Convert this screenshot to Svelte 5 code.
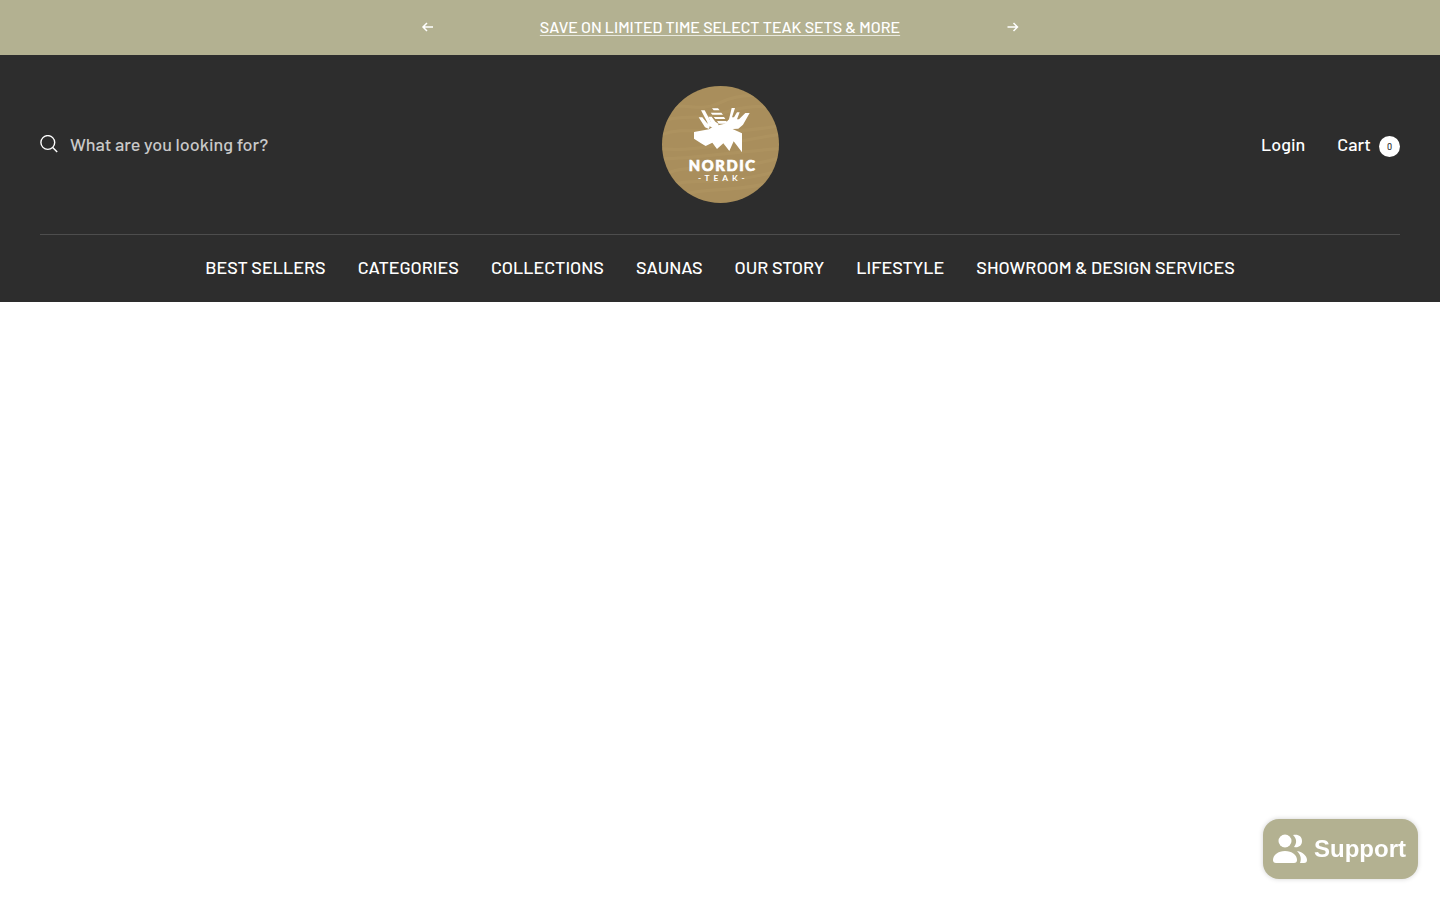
<script lang="ts">
	const links = [
		'Best sellers',
		'Categories',
		'Collections',
		'Saunas',
		'Our story',
		'Lifestyle',
		'Showroom & design services',
	];

	let query = $state('');
	let cartCount = $state(0);
</script>

<section class="announcement" aria-label="Announcements">
	<div class="announcement-inner">
		<button class="arrow" aria-label="Previous">
			<svg width="12" height="10" viewBox="0 0 12 10" fill="none" stroke="currentColor" stroke-width="1.5">
				<path d="M12 5H2M6 1 2 5l4 4" />
			</svg>
		</button>
		<a class="promo" href="#sale">Save on limited time select teak sets &amp; more</a>
		<button class="arrow" aria-label="Next">
			<svg width="12" height="10" viewBox="0 0 12 10" fill="none" stroke="currentColor" stroke-width="1.5">
				<path d="M.5 5h10M6.500 1l4 4-4 4" />
			</svg>
		</button>
	</div>
</section>

<header class="header">
	<div class="header-top">
		<form class="search" role="search">
			<label for="search-input" aria-label="Search">
				<svg width="18" height="18" viewBox="0 0 18 18" fill="none" stroke="currentColor" stroke-width="1.4">
					<circle cx="7.800" cy="7.500" r="6.900" />
					<path d="m12.700 12.400 4.500 4.500" />
				</svg>
			</label>
			<input id="search-input" type="text" placeholder="What are you looking for?" bind:value={query} />
		</form>

		<a class="logo" href="#home" aria-label="Nordic Teak">
			<svg width="117" height="117" viewBox="21 18 351 351">
				<defs>
					<clipPath id="logo-disc"><circle cx="196.500" cy="193.500" r="175.500" /></clipPath>
				</defs>
				<g clip-path="url(#logo-disc)">
					<path fill="#a98f5c" d="M21 18h351v351H21z" />
					<!-- wood grain -->
					<g fill="none" stroke="#b79d69" stroke-width="9" opacity="0.3">
						<path d="M20 90c60-30 110 10 170-20s120-30 190-10" />
						<path d="M20 122c70-20 110 0 180-22s120-26 180-12" />
						<path d="M20 164c80-30 150 10 360-28" />
						<path d="M20 206c90 10 150-10 360-44" />
						<path d="M20 236c110 0 190-20 360-30" />
						<path d="M20 290c70-50 160 0 360-58" />
						<path d="M30 320c90-34 150 6 350-50" />
						<path d="M60 350c90-30 160-10 300-44" />
					</g>
				</g>
				<g fill="#fff">
					<!-- head -->
					<path d="M117 156 162 148 176 139 216 130 226 144 261 160V217L236 184 223 213 205 190 186 207 172 188 152 198 138 190 117 176z" />
					<!-- left antler -->
					<path d="M131 112h11l14 17 9 5-3 13-12-5z" />
					<path d="M138 91h11l19 35 7 8v10l-13-6-7-15z" />
					<path d="M160 110h10l11 15 9 6v10h-16z" />
					<path d="M171 85h18l5 6h-18zM167 98h32l5 6h-32zM176 111h31l4 6h-30zM186 123h28l4 8h-27z" />
					<!-- right antler -->
					<path d="M230 84h10l-9 28h6l9-15h8l-8 21h6l19-19h13l-20 35-14 12-34 2-5-18 11-12z" />
				</g>
				<text class="logo-name" x="203" y="272" text-anchor="middle">NORDIC</text>
				<text class="logo-sub" x="205" y="302" text-anchor="middle">-TEAK-</text>
			</svg>
		</a>

		<div class="account">
			<a href="#login">Login</a>
			<a class="cart" href="#cart">Cart <span class="count">{cartCount}</span></a>
		</div>
	</div>

	<nav class="nav" aria-label="Main">
		{#each links as link}
			<a href="#{link}">{link}</a>
		{/each}
	</nav>
</header>

<button class="support">
	<svg width="34" height="30" viewBox="0 0 34 30" fill="currentColor">
		<circle cx="12" cy="7" r="6.500" />
		<path d="M0 26c0-5 5-9 12-9s12 4 12 9c0 2-1 3-3 3H3c-2 0-3-1-3-3z" />
		<path d="M20 1c5-1 9 1 9 6s-4 7-8 6c3-4 3-8-1-12z" />
		<path d="M24 17c6 1 10 5 10 9 0 2-1 3-3 3h-4c2-5 0-9-3-12z" />
	</svg>
	Support
</button>

<style>
	:global(body) {
		background: #fff;
		font-family: Barlow, Roboto, sans-serif;
		font-weight: 500;
	}

	a {
		color: inherit;
		text-decoration: none;
	}

	button {
		border: 0;
		padding: 0;
		color: inherit;
		background: none;
		cursor: pointer;
	}

	.announcement {
		background: #b3b191;
		color: #fff;
	}

	.announcement-inner {
		display: flex;
		align-items: center;
		justify-content: space-between;
		max-width: 598px;
		padding-bottom: 1px;
		height: 54px;
		margin: 0 auto;
	}

	.arrow {
		display: flex;
	}

	.promo {
		font-size: 16px;
		line-height: 18px;
		text-transform: uppercase;
		text-decoration: underline rgba(255, 255, 255, 0.7);
		text-decoration-thickness: 1px;
		text-underline-offset: 2px;
	}

	.header {
		padding: 0 40px;
		background: #2d2d2d;
		color: #fff;
		font-size: 18px;
	}

	.header-top {
		display: grid;
		grid-template-columns: 1fr auto 1fr;
		align-items: center;
		padding: 31px 0;
		border-bottom: 1px solid #4d4d4d;
	}

	.search {
		display: flex;
		align-items: center;
		gap: 12px;
		padding-bottom: 2px;
	}

	.search label {
		display: flex;
	}

	.search input {
		flex: 1;
		min-width: 0;
		padding: 0;
		border: 0;
		outline: 0;
		background: none;
		color: #fff;
		font: inherit;
	}

	.search input::placeholder {
		color: #c9c9c9;
		opacity: 1;
	}

	.logo {
		display: flex;
	}

	.logo-name {
		fill: #fff;
		stroke: #fff;
		stroke-width: 2px;
		font-family: Lato, sans-serif;
		font-size: 44px;
		font-weight: 900;
		letter-spacing: 5px;
	}

	.logo-sub {
		fill: #fff;
		font-family: Lato, sans-serif;
		font-size: 25px;
		font-weight: 700;
		letter-spacing: 12px;
	}

	.account {
		display: flex;
		justify-content: flex-end;
		gap: 32px;
		line-height: 22px;
	}

	.cart {
		display: flex;
		gap: 8px;
	}

	.count {
		display: grid;
		place-items: center;
		align-self: end;
		width: 21px;
		height: 21px;
		margin-top: 3px;
		border-radius: 50%;
		background: #fff;
		color: #2d2d2d;
		font-size: 9px;
	}

	.nav {
		display: flex;
		flex-wrap: wrap;
		justify-content: center;
		gap: 8px 32px;
		padding: 19px 0 21px;
		line-height: 27px;
		text-transform: uppercase;
	}

	.support {
		position: fixed;
		right: 22px;
		bottom: 21px;
		display: flex;
		align-items: center;
		gap: 7px;
		height: 60px;
		padding: 0 12px 0 10px;
		border-radius: 16px;
		background: #b3b191;
		box-shadow: 0 0 5px rgba(0, 0, 0, 0.18);
		color: #fff;
		font: bold 24px 'Liberation Sans', Arial, sans-serif;
	}
</style>
